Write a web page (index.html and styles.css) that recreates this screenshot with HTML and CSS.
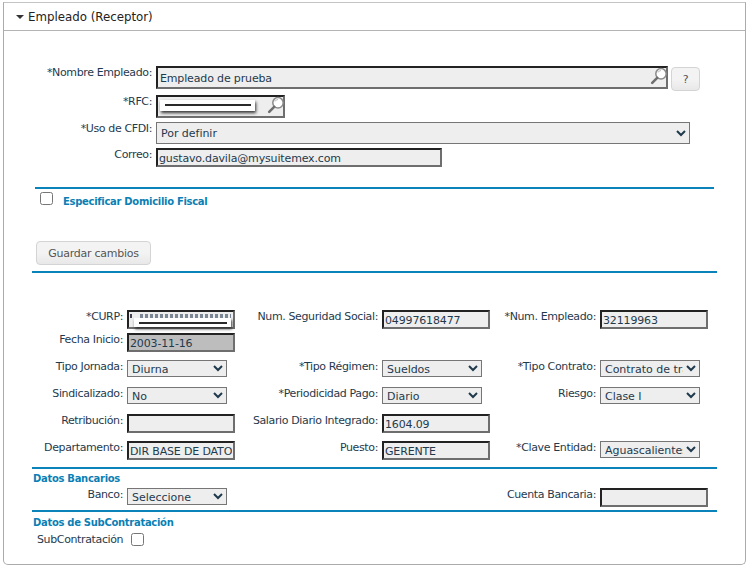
FILE: index.html
```html
<!DOCTYPE html>
<html lang="es">
<head>
<meta charset="utf-8">
<title>Empleado (Receptor)</title>
<link rel="stylesheet" href="styles.css">
</head>
<body>
<section class="panel">
  <header class="panel-head"><span class="caret"></span><h2>Empleado (Receptor)</h2></header>

  <div class="top-form">
    <div class="t-row r1">
      <label class="lbl">*Nombre Empleado:</label>
      <div class="wrap w-nombre">
        <input class="inp full" type="text" value="Empleado de prueba">
        <svg class="lens" viewBox="0 0 18 18"><circle cx="11" cy="6.8" r="5.2" fill="#fff" stroke="#8a8a8a" stroke-width="1.5"/><path d="M8 5.5a3.4 3.4 0 0 1 3-2" stroke="#bbb" fill="none"/><path d="M7.2 10.8 2.2 15.8" stroke="#6f6f6f" stroke-width="2.6" stroke-linecap="round" fill="none"/></svg>
      </div>
      <button class="btn help" type="button">?</button>
    </div>
    <div class="t-row r2">
      <label class="lbl">*RFC:</label>
      <div class="wrap w-rfc">
        <input class="inp full" type="text" value="">
        <span class="redact rfc-mask"></span>
        <svg class="lens" viewBox="0 0 18 18"><circle cx="11" cy="6.8" r="5.2" fill="#fff" stroke="#8a8a8a" stroke-width="1.5"/><path d="M8 5.5a3.4 3.4 0 0 1 3-2" stroke="#bbb" fill="none"/><path d="M7.2 10.8 2.2 15.8" stroke="#6f6f6f" stroke-width="2.6" stroke-linecap="round" fill="none"/></svg>
      </div>
    </div>
    <div class="t-row r3">
      <label class="lbl">*Uso de CFDI:</label>
      <select class="sel w-uso"><option>Por definir</option></select>
    </div>
    <div class="t-row r4">
      <label class="lbl">Correo:</label>
      <input class="inp w-correo" type="text" value="gustavo.davila@mysuitemex.com">
    </div>
  </div>

  <hr class="rule narrow r-a">
  <div class="domicilio">
    <input class="chk" type="checkbox">
    <span class="sub-title">Especificar Domicilio Fiscal</span>
  </div>
  <button class="btn save" type="button">Guardar cambios</button>
  <hr class="rule r-b">

  <div class="grid">
    <label class="lbl">*CURP:</label>
    <div class="wrap w-f"><input class="inp full" type="text" value=""><span class="redact curp-mask"></span></div>
    <label class="lbl">Num. Seguridad Social:</label>
    <input class="inp w-f" type="text" value="04997618477">
    <label class="lbl">*Num. Empleado:</label>
    <input class="inp w-f" type="text" value="32119963">

    <label class="lbl">Fecha Inicio:</label>
    <input class="inp w-f dim" type="text" value="2003-11-16">
    <span></span><span></span><span></span><span></span>

    <label class="lbl">Tipo Jornada:</label>
    <select class="sel w-s"><option>Diurna</option></select>
    <label class="lbl">*Tipo Régimen:</label>
    <select class="sel w-s"><option>Sueldos</option></select>
    <label class="lbl">*Tipo Contrato:</label>
    <select class="sel w-s"><option>Contrato de trabajo</option></select>

    <label class="lbl">Sindicalizado:</label>
    <select class="sel w-s"><option>No</option></select>
    <label class="lbl">*Periodicidad Pago:</label>
    <select class="sel w-s"><option>Diario</option></select>
    <label class="lbl">Riesgo:</label>
    <select class="sel w-s"><option>Clase I</option></select>

    <label class="lbl">Retribución:</label>
    <input class="inp w-f" type="text" value="">
    <label class="lbl">Salario Diario Integrado:</label>
    <input class="inp w-f" type="text" value="1604.09">
    <span></span><span></span>

    <label class="lbl">Departamento:</label>
    <input class="inp w-f" type="text" value="DIR BASE DE DATOS">
    <label class="lbl">Puesto:</label>
    <input class="inp w-f" type="text" value="GERENTE">
    <label class="lbl">*Clave Entidad:</label>
    <select class="sel w-s"><option>Aguascalientes</option></select>
  </div>

  <hr class="rule r-c">
  <h3 class="sub-title sec">Datos Bancarios</h3>
  <div class="grid bank">
    <label class="lbl">Banco:</label>
    <select class="sel w-s"><option>Seleccione</option></select>
    <span></span><span></span>
    <label class="lbl">Cuenta Bancaria:</label>
    <input class="inp w-f" type="text" value="">
  </div>
  <hr class="rule r-d">
  <h3 class="sub-title sec sec-sub">Datos de SubContratación</h3>
  <div class="subc">
    <label class="lbl">SubContratación</label>
    <input class="chk" type="checkbox">
  </div>
</section>
</body>
</html>
```
FILE: styles.css
```css
* { box-sizing: border-box; }
html, body { margin: 0; padding: 0; background: #fff; }
body {
  padding: 2px 2px 2px 3px;
  font-family: "DejaVu Sans", Verdana, sans-serif;
  font-size: 11px;
  color: #1f3a4d;
}
.panel {
  height: 563px;
  width: 743px;
  border: 1px solid #ababab;
  border-top-color: #c4c4c4;
  border-radius: 0 0 5px 5px;
}
.panel-head {
  height: 28px;
  border-bottom: 1px solid #b4b4b4;
  display: flex;
  align-items: center;
  padding-left: 12px;
  gap: 4px;
}
.panel-head h2 {
  margin: 0;
  font-size: 11.8px;
  font-weight: 400;
  color: #222;
}
.caret {
  width: 0; height: 0;
  border-left: 4px solid transparent;
  border-right: 4px solid transparent;
  border-top: 4px solid #333;
}
.lbl { text-align: right; white-space: nowrap; line-height: 13px; letter-spacing: -0.37px; }
.inp {
  height: 19px;
  border-style: solid;
  border-width: 2px;
  border-color: #222 #6e6e6e #6e6e6e #222;
  background: #eee;
  padding: 1px 1px 0;
  font: inherit;
  letter-spacing: -0.15px;
  color: inherit;
  border-radius: 0;
  outline: 0;
  display: block;
}
.inp.full { width: 100%; height: 100%; }
.inp.dim { background: #bdbdbd; }
.sel {
  height: 17px;
  border: 1px solid #767676;
  border-radius: 0;
  background-color: #eee;
  font: inherit;
  letter-spacing: -0.03px;
  color: inherit;
  padding: 1px 0 0;
  display: block;
}
.wrap { position: relative; }
.lens { position: absolute; top: 1px; right: 0; width: 18px; height: 18px; }

.top-form { padding: 35px 0 0 0; }
.t-row { display: flex; align-items: flex-start; }
.t-row .lbl { width: 148px; margin-right: 4px; }
.r1 { height: 29px; }
.r2 { height: 27px; }
.r3 { height: 26px; }
.r4 { height: 20px; }
.w-nombre { width: 512px; height: 23px; }
.w-rfc { width: 129px; height: 23px; }
.w-uso { width: 534px; height: 22px; }
.w-correo { width: 286px; }
.r1 .inp, .r2 .inp { padding-left: 2px; }
.help {
  width: 29px;
  height: 24px;
  margin: 1px 0 0 3px;
  padding: 0;
  color: #556;
}
.btn {
  border: 1px solid #d4d4d4;
  border-radius: 4px;
  background: linear-gradient(#f3f3f3 0 50%, #e8e8e8 100%);
  font: inherit;
  letter-spacing: -0.25px;
  color: #555;
}
.save {
  display: block;
  width: 115px;
  height: 24px;
  margin: 0 0 0 32px;
}
.redact {
  position: absolute;
  background: #fff;
  box-shadow: 1px 2px 3px #333;
}
.redact::after {
  content: "";
  position: absolute;
  left: 5px;
  right: 4px;
  top: 4px;
  height: 2px;
  background: #2a2a2a;
}
.rfc-mask { left: 4px; top: 5px; width: 95px; height: 11px; }
.curp-mask { left: 7px; top: 8px; width: 97px; height: 9px; }
.curp-mask::before {
  content: "";
  position: absolute;
  left: -4px;
  right: 0;
  top: -4px;
  height: 4px;
  background:
    linear-gradient(#445, #445) left top / 2px 12px no-repeat,
    linear-gradient(#eee, #eee) 2px top / 6px 100% no-repeat,
    repeating-linear-gradient(90deg, #7b8794 0 3px, #eee 3px 5px);
}
.rule {
  height: 2px;
  margin: 0;
  border: 0;
  background: #0a83bb;
}
.narrow { margin-left: 31px; width: 679px; }
.rule:not(.narrow) { margin-left: 28px; width: 685px; }
.r-a { margin-top: 19px; }
.r-b { margin-top: 6px; }
.domicilio { height: 52px; position: relative; padding-left: 59px; padding-top: 6px; }
.chk {
  appearance: auto;
  width: 13px;
  height: 13px;
  margin: 0;
}
.domicilio .chk { position: absolute; left: 36px; top: 3px; }
.sub-title { color: #0a7fb5; font-weight: 700; font-size: 10px; letter-spacing: -0.3px; }
.sec { margin: 3px 0 0; padding-left: 29px; line-height: 13px; }
.sec-sub { margin-top: 4px; }

.grid {
  display: grid;
  grid-template-columns: 119px 108px 139px 108px 102px 108px;
  column-gap: 4px;
  margin-top: 37px;
  grid-template-rows: 23px 27px 27px 27px 27px 26px;
  align-items: start;
}
.w-f { width: 108px; height: 19px; }
.w-s { width: 100px; }
.r-c { margin-top: 0; }
.bank { margin-top: 3px; grid-template-rows: 22px; }
.r-d { margin-top: 0; }
.subc { display: flex; align-items: center; gap: 9px; padding-left: 33px; margin-top: 4px; }
.subc .lbl { width: 85px; }
```
